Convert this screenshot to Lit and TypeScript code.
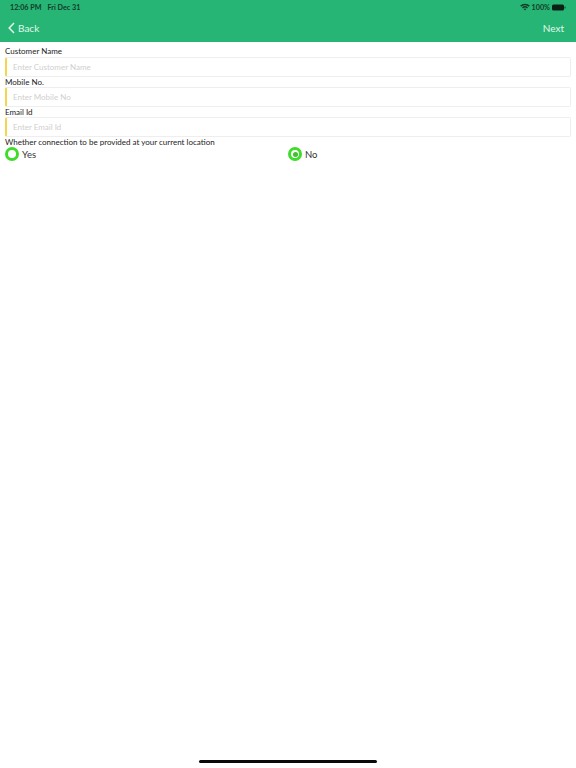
import { LitElement, html, css } from "lit";
import { customElement } from "lit/decorators.js";

@customElement("app-root")
export class AppRoot extends LitElement {
  static styles = css`
    :host { display: block; width: 576px; height: 768px; position: relative; overflow: hidden; background: #fff;
      font-family: Lato, "Liberation Sans", sans-serif; color: #222; }
    .header { height: 42px; background: #26b574; color: #fff; display: flex; flex-direction: column; box-sizing: border-box; }
    .status { height: 14px; display: flex; align-items: center; padding: 0 10px; font-size: 7.2px; font-weight: 700; color: #123a28; }
    .status .date { margin-left: 6px; }
    .status .right { margin-left: auto; display: flex; align-items: center; gap: 2px; }
    .nav { flex: 1; display: flex; align-items: center; justify-content: space-between; padding: 0 12px 0 8px; font-size: 10px; color: #e4f7ee; }
    .back { display: flex; align-items: center; gap: 3px; }
    .form { padding: 4px 5px 0 5px; display: flex; flex-direction: column; }
    .label { font-size: 8px; line-height: 11px; height: 11px; color: #222; }
    .label.tight { height: 10px; line-height: 10px; }
    .label.last { line-height: 10px; }
    .input { height: 20px; box-sizing: border-box; border: 1px solid #eeeeee; border-left: 2px solid #f3d64e; border-radius: 2px;
      display: flex; align-items: center; padding: 0 6px 1px; font-size: 8px; color: #cfcfcf; }
    .radios { display: grid; grid-template-columns: 283px 1fr; height: 14px; margin-top: -1px; }
    .radio { display: flex; align-items: center; gap: 3px; font-size: 9.5px; color: #333; }
    .dot { width: 14px; height: 14px; box-sizing: border-box; border-radius: 50%; border: 3px solid #3fdc2c; background: #fff; display: flex; align-items: center; justify-content: center; }
    .dot.on::after { content: ""; width: 5px; height: 5px; border-radius: 50%; background: #3fc02c; }
    .home { position: absolute; left: 199px; top: 760px; width: 178px; height: 3px; border-radius: 2px; background: #0a0a0a; }
  `;

  render() {
    return html`
      <div class="header">
        <div class="status">
          <span>12:06 PM</span><span class="date">Fri Dec 31</span>
          <span class="right">
            <svg width="10" height="8" viewBox="0 0 10 8"><path d="M0.2 2.6a7 7 0 0 1 9.6 0L8.8 3.7a5.5 5.5 0 0 0-7.6 0zM2 4.4a4.5 4.5 0 0 1 6 0L7 5.5a3 3 0 0 0-4 0zM3.7 6.1a2 2 0 0 1 2.6 0L5 7.6z" fill="#123a28"/></svg>
            <span>100%</span>
            <svg width="14" height="7" viewBox="0 0 14 7"><rect x="0" y="0.5" width="12" height="6" rx="1.5" fill="#0c1f16"/><rect x="12.5" y="2.5" width="1" height="2" rx="0.5" fill="#123a28"/></svg>
          </span>
        </div>
        <div class="nav">
          <span class="back">
            <svg width="7" height="12" viewBox="0 0 7 12"><path d="M6 1 L1.2 6 L6 11" fill="none" stroke="#e4f7ee" stroke-width="1.5"/></svg>
            <span>Back</span>
          </span>
          <span>Next</span>
        </div>
      </div>
      <div class="form">
        <div class="label">Customer Name</div>
        <div class="input">Enter Customer Name</div>
        <div class="label tight">Mobile No.</div>
        <div class="input">Enter Mobile No</div>
        <div class="label tight">Email Id</div>
        <div class="input">Enter Email Id</div>
        <div class="label last">Whether connection to be provided at your current location</div>
        <div class="radios">
          <div class="radio"><span class="dot"></span><span>Yes</span></div>
          <div class="radio"><span class="dot on"></span><span>No</span></div>
        </div>
      </div>
      <div class="home"></div>
    `;
  }
}
